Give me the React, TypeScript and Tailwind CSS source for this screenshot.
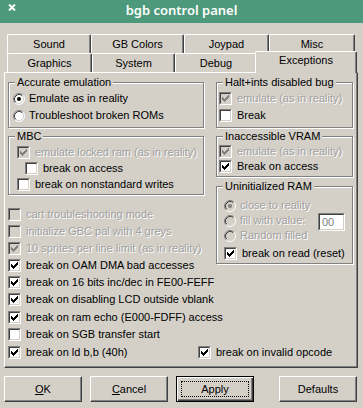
import React from 'react';

interface OptProps {
  radio?: boolean;
  checked?: boolean;
  disabled?: boolean;
  className?: string;
  children: React.ReactNode;
}

const Check: React.FC<{ color: string }> = ({ color }) => (
  <svg width="7" height="7" viewBox="0 0 7 7" shapeRendering="crispEdges" fill={color}>
    <path d="M0 2h1v3H0zM1 3h1v3H1zM2 4h1v3H2zM3 3h1v3H3zM4 2h1v3H4zM5 1h1v3H5zM6 0h1v3H6z" />
  </svg>
);

const CheckBox: React.FC<{ checked?: boolean; disabled?: boolean }> = ({ checked, disabled }) => (
  <span className="block w-[13px] h-[13px] shrink-0 border border-t-[#808080] border-l-[#808080] border-r-white border-b-white">
    <span
      className={`flex items-center justify-center w-full h-full border border-t-[#404040] border-l-[#404040] border-r-[#d4d0c8] border-b-[#d4d0c8] ${
        disabled ? 'bg-[#d4d0c8]' : 'bg-white'
      }`}
    >
      {checked && <Check color={disabled ? '#808080' : '#000'} />}
    </span>
  </span>
);

const Radio: React.FC<{ checked?: boolean; disabled?: boolean }> = ({ checked, disabled }) => (
  <svg width="12" height="12" viewBox="0 0 12 12" className="shrink-0">
    <circle cx="6" cy="6" r="5" fill={disabled ? '#d4d0c8' : '#fff'} />
    <path d="M2.11 9.89A5.5 5.5 0 0 1 9.89 2.11" stroke="#808080" fill="none" />
    <path d="M9.89 2.11A5.5 5.5 0 0 1 2.11 9.89" stroke="#fff" fill="none" />
    <path d="M2.82 9.18A4.5 4.5 0 0 1 9.18 2.82" stroke="#404040" fill="none" />
    <path d="M9.18 2.82A4.5 4.5 0 0 1 2.82 9.18" stroke="#d4d0c8" fill="none" />
    {checked && <circle cx="6" cy="6" r="2" fill={disabled ? '#808080' : '#000'} />}
  </svg>
);

const Opt: React.FC<OptProps> = ({ radio, checked, disabled, className = '', children }) => (
  <div className={`flex items-center whitespace-nowrap ${radio ? 'gap-[4px]' : 'gap-[5px]'} ${className}`}>
    {radio ? <Radio checked={checked} disabled={disabled} /> : <CheckBox checked={checked} disabled={disabled} />}
    <span className={disabled ? 'text-[#a0a0a0] [text-shadow:1px_1px_0_#fff]' : ''}>{children}</span>
  </div>
);

const Group: React.FC<{ label: string; className?: string; children: React.ReactNode }> = ({ label, className = '', children }) => (
  <div className={`relative border border-[#808080] shadow-[inset_1px_1px_0_#fff,1px_1px_0_#fff] ${className}`}>
    <span className="absolute left-[6px] -top-[7px] px-[2px] bg-[#d4d0c8] leading-[13px] whitespace-nowrap">{label}</span>
    {children}
  </div>
);

const Tab: React.FC<{ label: string; w: string; active?: boolean }> = ({ label, w, active }) => (
  <div
    className={`${w} flex items-center justify-center border-l border-t border-r border-l-white border-t-white border-r-[#404040] rounded-t-[2px] shadow-[inset_-1px_0_0_#808080] ${
      active ? 'relative z-10 h-[22px] -mt-[2px] -ml-[2px] pb-[4px] bg-[#d4d0c8]' : 'h-full'
    }`}
  >
    {label}
  </div>
);

const Button: React.FC<{ children: React.ReactNode; className?: string; focused?: boolean }> = ({ children, className = '', focused }) =>
  focused ? (
    <button className={`relative w-[78px] h-[26px] border border-black ${className}`}>
      <span className="flex items-center justify-center w-full h-full shadow-[inset_1px_1px_0_#fff,inset_-1px_-1px_0_#404040,inset_-2px_-2px_0_#808080]">
        {children}
      </span>
      <span className="absolute inset-[4px] border border-dotted border-black" />
    </button>
  ) : (
    <button
      className={`w-[78px] h-[26px] flex items-center justify-center border border-t-white border-l-white border-r-[#404040] border-b-[#404040] shadow-[inset_-1px_-1px_0_#808080] ${className}`}
    >
      {children}
    </button>
  );

export default function App() {
  return (
    <div className="w-[363px] h-[408px] overflow-hidden bg-[#d4d0c8] text-black text-[11px] leading-[13px] font-['Liberation_Sans',Arial,sans-serif]">
      {/* Title bar */}
      <div className="h-[23px] bg-[#4c9a7b] grid grid-cols-[1fr_auto_1fr] items-start text-white">
        <svg className="ml-[8px] mt-[4px]" width="8" height="7" viewBox="0 0 8 7">
          <path d="M1 0.5l6 6M7 0.5l-6 6" stroke="#fff" strokeWidth="2" />
        </svg>
        <span className="mt-[2px] font-['Noto_Sans',sans-serif] text-[13px] leading-[16px] font-semibold">bgb control panel</span>
        <span />
      </div>

      {/* Tabs */}
      <div className="mt-[11px] px-[4px]">
        <div className="pl-[3px]">
          <div className="flex h-[19px]">
            <Tab label="Sound" w="w-[84px]" />
            <Tab label="GB Colors" w="w-[93px]" />
            <Tab label="Joypad" w="w-[85px]" />
            <Tab label="Misc" w="w-[86px]" />
          </div>
          <div className="flex h-[19px]">
            <Tab label="Graphics" w="w-[85px]" />
            <Tab label="System" w="w-[83px]" />
            <Tab label="Debug" w="w-[82px]" />
            <Tab label="Exceptions" w="w-[102px]" active />
          </div>
        </div>

        {/* Panel */}
        <div className="w-[354px] h-[296px] border border-t-white border-l-white border-r-[#404040] border-b-[#404040] shadow-[inset_-1px_-1px_0_#808080] pt-[9px] pl-[3px] pr-[3px]">
          <div className="grid grid-cols-[196px_137px] gap-x-[12px] items-start">
            {/* left column */}
            <div className="flex flex-col">
              <Group label="Accurate emulation" className="h-[46px] pt-[7px] pl-[4px]">
                <Opt radio checked className="h-[17px]">Emulate as in reality</Opt>
                <Opt radio className="h-[17px]">Troubleshoot broken ROMs</Opt>
              </Group>
              <Group label="MBC" className="mt-[8px] h-[59px] pt-[7px] pl-[8px]">
                <Opt checked disabled className="h-[16px]">emulate locked ram (as in reality)</Opt>
                <Opt className="h-[16px] ml-[8px]">break on access</Opt>
                <Opt className="h-[16px]">break on nonstandard writes</Opt>
              </Group>
              <div className="mt-[11px] flex flex-col">
                <Opt disabled className="h-[17px]">cart troubleshooting mode</Opt>
                <Opt disabled className="h-[17px]">initialize GBC pal with 4 greys</Opt>
                <Opt checked disabled className="h-[17px]">10 sprites per line limit (as in reality)</Opt>
                <Opt checked className="h-[17px]">break on OAM DMA bad accesses</Opt>
              </div>
            </div>

            {/* right column */}
            <div className="flex flex-col">
              <Group label="Halt+ints disabled bug" className="h-[46px] pt-[7px] pl-[2px]">
                <Opt checked disabled className="h-[17px]">emulate (as in reality)</Opt>
                <Opt className="h-[17px]">Break</Opt>
              </Group>
              <Group label="Inaccessible VRAM" className="mt-[8px] h-[41px] pt-[7px] pl-[2px]">
                <Opt checked disabled className="h-[15px]">emulate (as in reality)</Opt>
                <Opt checked className="h-[15px]">Break on access</Opt>
              </Group>
              <Group label="Uninitialized RAM" className="mt-[9px] h-[78px] pt-[11px] pl-[7px] pr-[7px]">
                <Opt radio checked disabled className="h-[15px]">close to reality</Opt>
                <div className="flex items-center h-[15px]">
                  <Opt radio disabled>fill with value:</Opt>
                  <span className="ml-auto mt-[3px] w-[27px] h-[18px] shrink-0 border border-t-[#808080] border-l-[#808080] border-r-white border-b-white">
                    <span className="flex items-center w-full h-full pl-[2px] bg-white text-[#7f7f7f] border border-t-[#404040] border-l-[#404040] border-r-[#d4d0c8] border-b-[#d4d0c8]">
                      00
                    </span>
                  </span>
                </div>
                <Opt radio disabled className="h-[15px]">Random filled</Opt>
                <Opt checked className="mt-[3px] h-[15px]">break on read (reset)</Opt>
              </Group>
            </div>
          </div>

          <div className="flex flex-col">
            <Opt checked className="h-[17px]">break on 16 bits inc/dec in FE00-FEFF</Opt>
            <Opt checked className="h-[17px]">break on disabling LCD outside vblank</Opt>
            <Opt checked className="mt-[1px] h-[17px]">break on ram echo (E000-FDFF) access</Opt>
            <Opt className="h-[17px]">break on SGB transfer start</Opt>
            <div className="mt-[1px] h-[17px] flex items-center">
              <Opt checked className="w-[190px]">break on ld b,b (40h)</Opt>
              <Opt checked>break on invalid opcode</Opt>
            </div>
          </div>
        </div>
      </div>

      {/* Buttons */}
      <div className="mt-[8px] px-[4px] flex">
        <Button>
          <span className="underline">O</span>K
        </Button>
        <Button className="ml-[8px]">
          <span className="underline">C</span>ancel
        </Button>
        <Button className="ml-[8px]" focused>
          Apply
        </Button>
        <Button className="ml-[25px]">Defaults</Button>
      </div>
    </div>
  );
}
